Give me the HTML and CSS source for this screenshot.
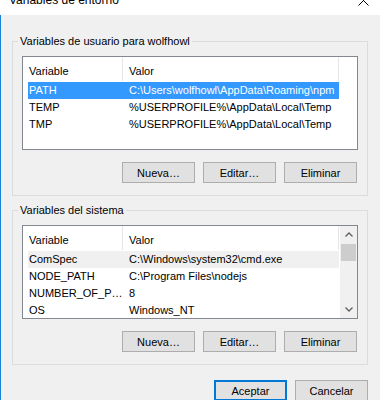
FILE: index.html
```html
<!DOCTYPE html>
<html>
<head>
    <title>Variables de entorno</title>
    <link rel="stylesheet" href="styles.css">
</head>
<body>
    <div class="titlebar">
        <span class="title">Variables de entorno</span>
        <svg class="close" width="11" height="11" viewBox="0 0 11 11">
            <path d="M0.5 0.5 L10.5 10.5 M10.5 0.5 L0.5 10.5" stroke="#000" stroke-width="1" fill="none"/>
        </svg>
    </div>
    <div class="window-body">
        <fieldset class="group">
            <legend>Variables de usuario para wolfhowl</legend>
            <div class="list">
                <div class="list-body">
                    <div class="list-head">
                        <div class="head-cell head-name">Variable</div>
                        <div class="head-cell head-value">Valor</div>
                    </div>
                    <div class="row selected"><span class="cell-name">PATH</span><span class="cell-value">C:\Users\wolfhowl\AppData\Roaming\npm</span></div>
                    <div class="row"><span class="cell-name">TEMP</span><span class="cell-value">%USERPROFILE%\AppData\Local\Temp</span></div>
                    <div class="row"><span class="cell-name">TMP</span><span class="cell-value">%USERPROFILE%\AppData\Local\Temp</span></div>
                </div>
            </div>
            <div class="buttons">
                <button class="btn">Nueva…</button>
                <button class="btn">Editar…</button>
                <button class="btn">Eliminar</button>
            </div>
        </fieldset>

        <fieldset class="group">
            <legend>Variables del sistema</legend>
            <div class="list">
                <div class="list-body">
                    <div class="list-head">
                        <div class="head-cell head-name">Variable</div>
                        <div class="head-cell head-value">Valor</div>
                    </div>
                    <div class="row inactive"><span class="cell-name">ComSpec</span><span class="cell-value">C:\Windows\system32\cmd.exe</span></div>
                    <div class="row"><span class="cell-name">NODE_PATH</span><span class="cell-value">C:\Program Files\nodejs</span></div>
                    <div class="row"><span class="cell-name">NUMBER_OF_P…</span><span class="cell-value">8</span></div>
                    <div class="row"><span class="cell-name">OS</span><span class="cell-value">Windows_NT</span></div>
                </div>
                <div class="scrollbar">
                    <div class="scroll-arrow">
                        <svg width="8" height="5" viewBox="0 0 8 5"><path d="M0.5 4.5 L4 1 L7.5 4.5" stroke="#606060" stroke-width="1.3" fill="none"/></svg>
                    </div>
                    <div class="scroll-track"><div class="scroll-thumb"></div></div>
                    <div class="scroll-arrow">
                        <svg width="8" height="5" viewBox="0 0 8 5"><path d="M0.5 0.5 L4 4 L7.5 0.5" stroke="#606060" stroke-width="1.3" fill="none"/></svg>
                    </div>
                </div>
            </div>
            <div class="buttons">
                <button class="btn">Nueva…</button>
                <button class="btn">Editar…</button>
                <button class="btn">Eliminar</button>
            </div>
        </fieldset>

        <div class="dialog-buttons">
            <button class="btn btn-default">Aceptar</button>
            <button class="btn">Cancelar</button>
        </div>
    </div>
</body>
</html>
```

FILE: styles.css
```css
/* Windows 10 dialog look */
body {
    margin: 0;
    font-family: "Segoe UI", "Liberation Sans", Arial, sans-serif;
    font-size: 11px;
    color: #000;
    background-color: #f0f0f0;
    overflow: hidden;
}
.titlebar {
    display: flex;
    align-items: flex-start;
    height: 15px;
    background-color: #fff;
    overflow: hidden;
}
.title {
    margin: -8px 0 0 9px;
    font-size: 12px;
    line-height: 16px;
}
.close {
    margin: -5px 11px 0 auto;
}
.window-body {
    height: 385px;
    box-sizing: border-box;
    padding-top: 18px;
    border-left: 1px solid #1883d7;
}
/* Group boxes */
.group {
    width: 356px;
    box-sizing: border-box;
    margin: 0 0 0 11px;
    padding: 7px 9px 12px;
    border: 1px solid #dcdcdc;
}
.group + .group {
    margin-top: 6px;
}
legend {
    margin-left: -4px;
    padding: 0 2px;
    line-height: 16px;
}
/* List views */
.list {
    display: flex;
    height: 94px;
    box-sizing: border-box;
    border: 1px solid #828790;
    background-color: #fff;
}
.list-body {
    flex: 1;
    overflow: hidden;
}
.list-head {
    display: flex;
    height: 24px;
    margin-bottom: 1px;
}
.head-cell {
    box-sizing: border-box;
    padding: 6px 0 0 6px;
    line-height: 16px;
    border-right: 1px solid #e5e5e5;
}
.head-name {
    width: 100px;
}
.head-value {
    width: 216px;
}
.row {
    display: flex;
    width: 311px;
    margin-left: 5px;
    line-height: 17px;
    white-space: nowrap;
}
.cell-name {
    width: 100px;
    box-sizing: border-box;
    padding-left: 1px;
}
.cell-value {
    flex: 1;
    padding-left: 1px;
    overflow: hidden;
}
.row.selected {
    background-color: #3399ff;
    color: #fff;
}
.row.inactive {
    background-color: #f0f0f0;
}
/* Scrollbar */
.scrollbar {
    display: flex;
    flex-direction: column;
    width: 17px;
    background-color: #f0f0f0;
}
.scroll-arrow {
    display: flex;
    align-items: center;
    justify-content: center;
    height: 17px;
}
.scroll-track {
    flex: 1;
}
.scroll-thumb {
    height: 17px;
    margin: 1px 1px 0;
    background-color: #cdcdcd;
}
/* Buttons */
.buttons {
    display: flex;
    justify-content: flex-end;
    gap: 8px;
    margin: 12px 1px 0 0;
}
.btn {
    width: 73px;
    height: 21px;
    box-sizing: border-box;
    padding: 0;
    border: 1px solid #adadad;
    background-color: #e1e1e1;
    font: inherit;
    color: #000;
}
.btn-default {
    border: 2px solid #0078d7;
}
.dialog-buttons {
    display: flex;
    justify-content: flex-end;
    gap: 8px;
    margin-top: 15px;
    padding-right: 12px;
}
```
